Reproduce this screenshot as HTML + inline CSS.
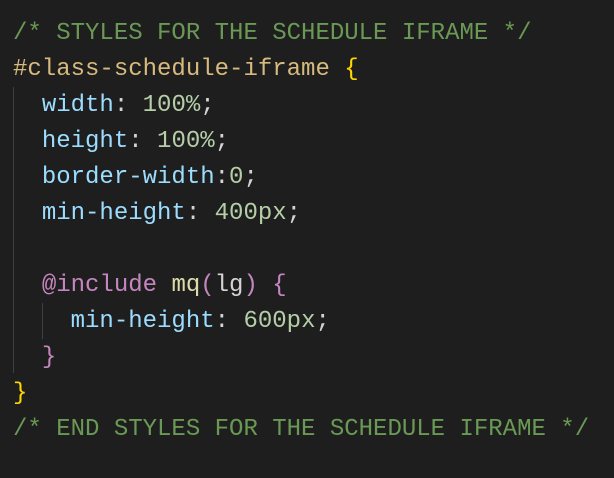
<!DOCTYPE html>
<html><head><style>
html,body{margin:0;padding:0;background:#1e1e1e;width:614px;height:478px;overflow:hidden}
pre{margin:0;position:absolute;left:13px;top:16px;font-family:"Liberation Mono",monospace;font-size:24px;line-height:36px;color:#d4d4d4;white-space:pre}
.c{color:#6a9955}.s{color:#d7ba7d}.p{color:#9cdcfe}.n{color:#b5cea8}.y{color:#ffd700}.m{color:#c586c0}.f{color:#dcdcaa}.w{color:#d4d4d4}
.g{position:absolute;width:1px;background:#404040}
</style></head><body>
<div class="g" style="left:13px;top:87px;height:286px"></div>
<div class="g" style="left:42px;top:303px;height:36px"></div>
<pre><span class="c">/* STYLES FOR THE SCHEDULE IFRAME */</span>
<span class="s">#class-schedule-iframe</span> <span class="y">{</span>
  <span class="p">width</span>: <span class="n">100%</span>;
  <span class="p">height</span>: <span class="n">100%</span>;
  <span class="p">border-width</span>:<span class="n">0</span>;
  <span class="p">min-height</span>: <span class="n">400px</span>;

  <span class="m">@include</span> <span class="f">mq</span><span class="m">(</span>lg<span class="m">)</span> <span class="m">{</span>
    <span class="p">min-height</span>: <span class="n">600px</span>;
  <span class="m">}</span>
<span class="y">}</span>
<span class="c">/* END STYLES FOR THE SCHEDULE IFRAME */</span></pre>
</body></html>
